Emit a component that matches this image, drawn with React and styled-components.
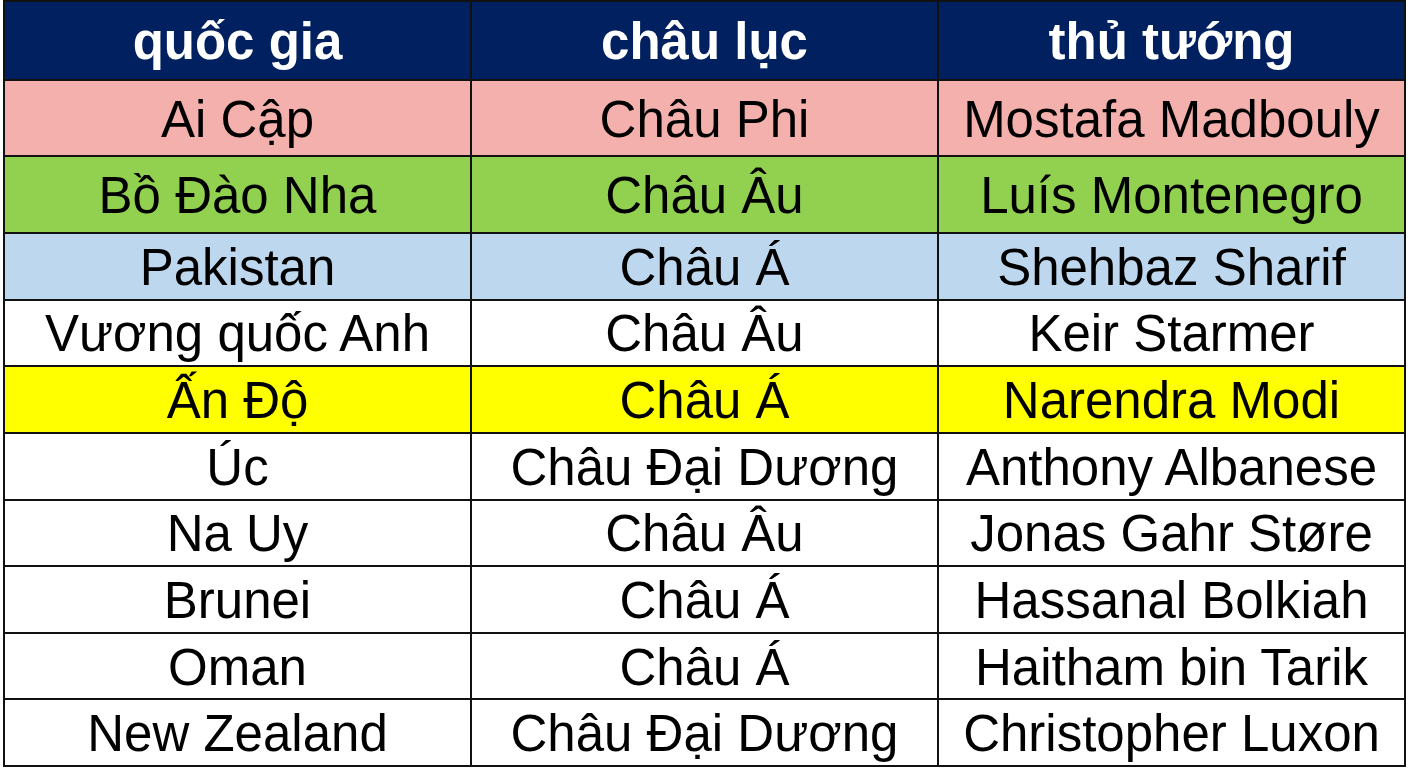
import React from "react";
import styled, { createGlobalStyle } from "styled-components";

const rows = [
  { bg: "#f4b0ac", cells: ["Ai Cập", "Châu Phi", "Mostafa Madbouly"] },
  { bg: "#92d050", cells: ["Bồ Đào Nha", "Châu Âu", "Luís Montenegro"] },
  { bg: "#bdd7ee", cells: ["Pakistan", "Châu Á", "Shehbaz Sharif"] },
  { bg: "#ffffff", cells: ["Vương quốc Anh", "Châu Âu", "Keir Starmer"] },
  { bg: "#ffff00", cells: ["Ấn Độ", "Châu Á", "Narendra Modi"] },
  { bg: "#ffffff", cells: ["Úc", "Châu Đại Dương", "Anthony Albanese"] },
  { bg: "#ffffff", cells: ["Na Uy", "Châu Âu", "Jonas Gahr Støre"] },
  { bg: "#ffffff", cells: ["Brunei", "Châu Á", "Hassanal Bolkiah"] },
  { bg: "#ffffff", cells: ["Oman", "Châu Á", "Haitham bin Tarik"] },
  { bg: "#ffffff", cells: ["New Zealand", "Châu Đại Dương", "Christopher Luxon"] }
];

const headings = ["quốc gia", "châu lục", "thủ tướng"];

const App = () => (
  <Page>
    <GlobalStyle />
    <Table>
      {headings.map(h => (
        <HeaderCell key={h}>{h}</HeaderCell>
      ))}
      {rows.map((row, i) =>
        row.cells.map((text, j) => (
          <Cell key={`${i}-${j}`} $bg={row.bg}>
            {text}
          </Cell>
        ))
      )}
    </Table>
  </Page>
);

export default App;

const GlobalStyle = createGlobalStyle`
  * {
    box-sizing: border-box;
  }
  body {
    margin: 0;
    background: #fff;
    font-family: "Liberation Sans", Arial, sans-serif;
  }
`;

const Page = styled.div`
  width: 1408px;
  height: 768px;
  padding: 0 2px 1px 3px;
`;

const Table = styled.div`
  height: 767px;
  display: grid;
  grid-template-columns: repeat(3, 1fr);
  grid-template-rows: 77px 74px 75px repeat(8, 1fr);
  gap: 2px;
  padding: 2px;
  background: #111;
`;

const HeaderCell = styled.div`
  background: #002060;
  color: #fff;
  font-weight: 700;
  font-size: 51px;
  display: flex;
  align-items: center;
  justify-content: center;
  padding-top: 2px;
`;

const Cell = styled.div`
  background: ${props => props.$bg};
  color: #000;
  font-size: 51px;
  display: flex;
  align-items: center;
  justify-content: center;
  padding-top: 2px;
  white-space: nowrap;
`;
